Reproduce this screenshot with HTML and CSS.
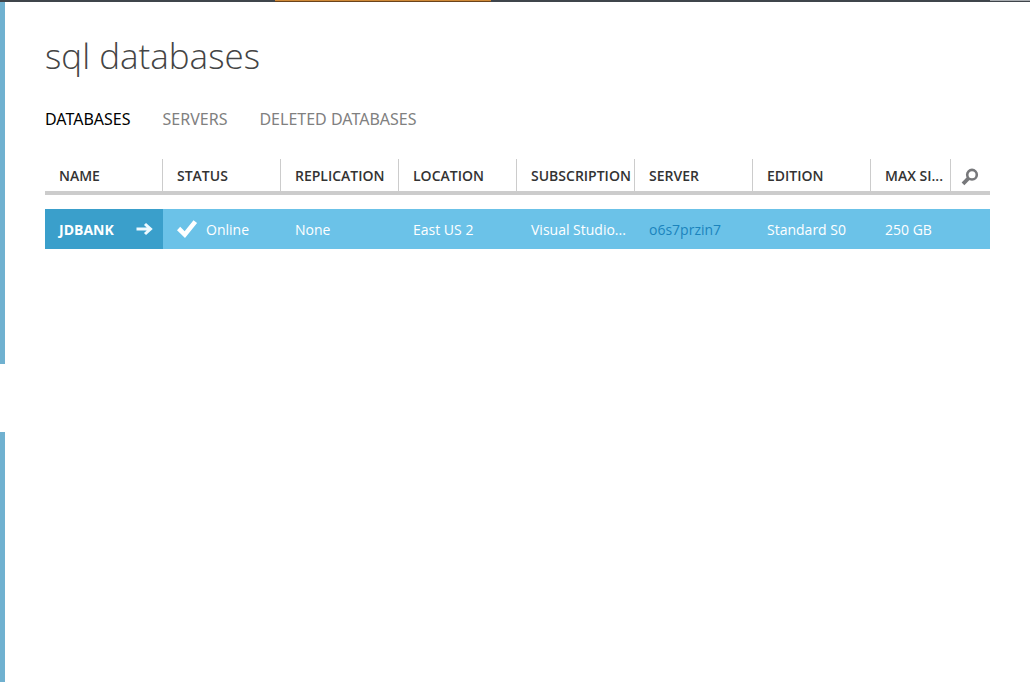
FILE: index.html
```html
<!DOCTYPE html>
<html lang="en">
<head>
<meta charset="utf-8">
<title>sql databases</title>
<link rel="stylesheet" href="styles.css">
</head>
<body>
<div class="topbar"><span class="topbar-accent"></span><span class="topbar-user"></span></div>
<div class="shell">
  <div class="rail"><span class="rail-upper"></span><span class="rail-lower"></span></div>
  <main class="content">
    <h1 class="title">sql databases</h1>
    <nav class="tabs">
      <a class="tab tab-active" href="#databases">DATABASES</a>
      <a class="tab" href="#servers">SERVERS</a>
      <a class="tab" href="#deleted">DELETED DATABASES</a>
    </nav>
    <table class="grid">
      <colgroup>
        <col><col><col><col><col><col><col>
        <col class="col-size"><col class="col-search">
      </colgroup>
      <thead>
        <tr>
          <th>NAME</th><th>STATUS</th><th>REPLICATION</th><th>LOCATION</th><th>SUBSCRIPTION</th><th>SERVER</th><th>EDITION</th><th>MAX SI...</th>
          <th class="search-cell"><button class="search" type="button" aria-label="Search"><svg width="18" height="18" viewBox="0 0 18 18"><circle cx="11" cy="6.7" r="4.8" fill="none" stroke="#77787b" stroke-width="2.6"/><path d="M7.4 10.4L2 15.8" stroke="#77787b" stroke-width="3.8"/></svg></button></th>
        </tr>
      </thead>
      <tbody>
        <tr>
          <td class="name"><div class="name-box">JDBANK<svg width="18" height="14" viewBox="0 0 18 14"><path d="M0.5 7H14.5M9 2L14.5 7L9 12" fill="none" stroke="#eefaff" stroke-width="3"/></svg></div></td>
          <td><div class="status"><svg width="22" height="20" viewBox="0 0 22 20"><path d="M1.6 9.5L7.8 15.6L18.3 2.6" fill="none" stroke="#fff" stroke-width="4.6"/></svg>Online</div></td>
          <td>None</td><td>East US 2</td><td>Visual Studio...</td><td><a class="server" href="#server">o6s7przin7</a></td><td>Standard S0</td><td>250 GB</td><td></td>
        </tr>
      </tbody>
    </table>
  </main>
</div>
</body>
</html>
```
FILE: styles.css
```css
* { box-sizing: border-box; }

body {
  margin: 0;
  min-height: 100vh;
  display: flex;
  flex-direction: column;
  background: #fff;
  color: #333;
  font-family: "Segoe UI", "Open Sans", "Noto Sans", sans-serif;
  font-size: 14px;
}

.topbar {
  height: 2px;
  display: flex;
  justify-content: space-between;
  padding-left: 275px;
  background: #3f454b;
}
.topbar-accent { width: 216px; background: #d08a38; border-bottom: 1px solid #6b431b; }
.topbar-user { width: 40px; height: 1px; background: #a9adb1; }

.shell { flex: 1; display: flex; }

.rail { width: 5px; display: flex; flex-direction: column; gap: 68px; }
.rail-upper { height: 362px; background: #70b1d0; }
.rail-lower { flex: 1; background: #70b1d0; }

.content { flex: 1; min-width: 0; padding: 30px 40px 0; }

.title {
  margin: 0;
  color: #444;
  font-size: 35px;
  font-weight: 300;
  line-height: 48px;
}

.tabs {
  display: flex;
  gap: 32px;
  margin-top: 27px;
  font-family: "Segoe UI", "Noto Sans", "Open Sans", sans-serif;
  font-size: 16px;
  line-height: 24px;
}
.tab { color: #808080; text-decoration: none; }
.tab-active { color: #000; }

.grid {
  width: 100%;
  margin-top: 28px;
  table-layout: fixed;
  border-spacing: 0;
}
.col-size { width: 80px; }
.col-search { width: 39px; }

.grid th {
  height: 36px;
  padding: 0 0 0 14px;
  border-bottom: 4px solid #ccc;
  box-shadow: inset -1px 0 #ccc;
  font-weight: 600;
  text-align: left;
  white-space: nowrap;
}
.grid .search-cell { padding: 0 0 0 10px; box-shadow: none; }
.search { display: block; padding: 6px 0 0; border: 0; background: none; }

.grid tbody::before { content: ""; display: table-row; height: 14px; }
.grid td {
  height: 40px;
  padding: 0 0 0 14px;
  background: #6bc2e8;
  color: #fff;
  white-space: nowrap;
}
.grid .name { background: #3a9fcb; font-weight: 700; }
.name-box { display: flex; align-items: center; justify-content: space-between; padding-right: 9px; }
.status { display: flex; align-items: center; gap: 7px; }
.server { color: #1b84bd; text-decoration: none; }
```
